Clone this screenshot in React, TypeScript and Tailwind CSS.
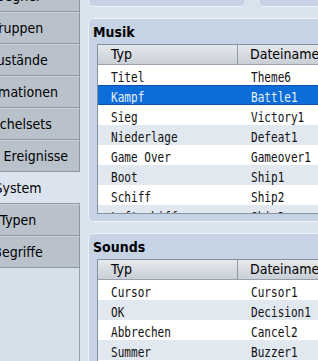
const tabs = [
  { label: "Gegner" },
  { label: "Truppen" },
  { label: "Zustände" },
  { label: "Animationen" },
  { label: "Kachelsets" },
  { label: "Allg.  Ereignisse" },
  { label: "System", active: true },
  { label: "Typen" },
  { label: "Begriffe" },
];

const musik = [
  ["Titel", "Theme6"],
  ["Kampf", "Battle1"],
  ["Sieg", "Victory1"],
  ["Niederlage", "Defeat1"],
  ["Game Over", "Gameover1"],
  ["Boot", "Ship1"],
  ["Schiff", "Ship2"],
  ["Luftschiff", "Ship3"],
];

const sounds = [
  ["Cursor", "Cursor1"],
  ["OK", "Decision1"],
  ["Abbrechen", "Cancel2"],
  ["Summer", "Buzzer1"],
  ["Ausrüsten", "Equip1"],
];

function Table({
  rows,
  selected,
  height,
}: {
  rows: string[][];
  selected?: number;
  height: string;
}) {
  return (
    <div className={`ml-[4px] mt-[4px] w-[260px] overflow-hidden border border-[#8792a0] bg-white ${height}`}>
      <div className="flex h-[20px] border-b border-[#97a0ab] bg-gradient-to-b from-[#e6e9ed] to-[#c9cfd6] text-[14px] leading-[19px] text-black">
        <div className="w-[140px] shrink-0 border-r border-[#8f98a2] pl-[13px]">Typ</div>
        <div className="pl-[12px]">Dateiname</div>
      </div>
      {rows.map(([typ, file], i) => {
        const isSel = i === selected;
        const bg = isSel
          ? "bg-[#0d6dd8] border-y border-[#0a55ad] text-[#e8f0fb]"
          : i % 2 === 0
            ? "bg-white text-[#111]"
            : "bg-[#e2e8ef] text-[#111]";
        return (
          <div key={typ} className={`flex h-[20px] items-center overflow-hidden font-['DejaVu_Sans_Mono',monospace] text-[14px] leading-[20px] ${bg}`}>
            <div className="w-[140px] shrink-0 pl-[13px] pt-[3px]">
              <span className="inline-block origin-left scale-x-[0.79] whitespace-pre">{typ}</span>
            </div>
            <div className="pl-[13px] pt-[3px]">
              <span className="inline-block origin-left scale-x-[0.79] whitespace-pre">{file}</span>
            </div>
          </div>
        );
      })}
    </div>
  );
}

function Panel({
  title,
  children,
  className,
}: {
  title: string;
  children: React.ReactNode;
  className: string;
}) {
  return (
    <div className={`w-[300px] shrink-0 rounded-[6px] border border-[#edf2f8] bg-[#c5d3e4] pl-[4px] pt-[5px] ${className}`}>
      <div className="text-[14px] font-bold leading-[16px] text-black">{title}</div>
      {children}
    </div>
  );
}

export default function App() {
  return (
    <div className="flex h-[361px] w-[318px] overflow-hidden bg-[#d9e3ee] font-['DejaVu_Sans_Condensed','DejaVu_Sans',sans-serif] text-[14px] text-black [font-stretch:condensed]">
      {/* tab column */}
      <div className="-mt-[20px] flex w-[80px] shrink-0 flex-col">
        {tabs.map((t) => (
          <div
            key={t.label}
            className={
              t.active
                ? "flex h-[32px] shrink-0 items-center overflow-hidden border-b border-[#8e969f] bg-[#dae3ee]"
                : "flex h-[32px] shrink-0 items-center overflow-hidden border-b border-r border-t border-b-[#8e969f] border-r-[#8e969f] border-t-[#ccd2d9] bg-[#b9c1ca]"
            }
          >
            <div className="-ml-[42px] w-[120px] shrink-0 whitespace-pre text-center leading-[18px]">{t.label}</div>
          </div>
        ))}
        <div className="flex-1 border-r border-[#98a1ab] bg-[#d6e0eb]" />
      </div>

      {/* content */}
      <div className="flex w-[320px] shrink-0 flex-col gap-[11px] pl-[8px]">
        <div className="-mt-[33px] flex h-[40px] shrink-0 gap-[12px]">
          <div className="w-[158px] shrink-0 rounded-[6px] border border-[#edf2f8] bg-[#c5d3e4]" />
          <div className="w-[100px] shrink-0 rounded-[6px] border border-[#edf2f8] bg-[#c5d3e4]" />
        </div>
        <Panel title="Musik" className="h-[204px]">
          <Table rows={musik} selected={1} height="h-[170px]" />
        </Panel>
        <Panel title="Sounds" className="h-[200px]">
          <Table rows={sounds} height="h-[160px]" />
        </Panel>
      </div>
    </div>
  );
}
